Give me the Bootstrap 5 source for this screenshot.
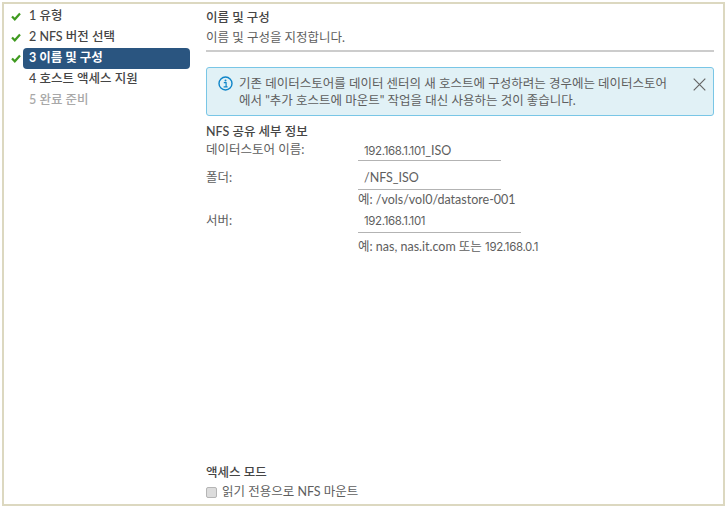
<!DOCTYPE html>
<html lang="ko">
<head>
<meta charset="utf-8">
<link rel="stylesheet" href="https://cdn.jsdelivr.net/npm/bootstrap@5.3.0/dist/css/bootstrap.min.css">
<style>
html,body{height:100%;margin:0;background:#fff}
body{font-family:Lato,"Noto Sans CJK KR",sans-serif;font-size:12.5px;line-height:16px;color:#5e5e5e;padding:2px}
.frame{height:504px;width:723px;border:2px solid #dcd8c0;background:#fff}
.steps{width:186px;padding:2px 0 0 7px;flex:none}
.step{height:21px;display:flex;align-items:center;font-weight:500;color:#454545}
.step svg{width:10px;height:9px;flex:none;margin-right:2px}
.step-body{flex:1;height:21px;line-height:20px;padding-left:6px;border-radius:4px}
.step-body.active-step{background:#2a5580;color:#fff;font-weight:700}
.step-none{margin-left:12px}
.step-muted{color:#a8a8a8}
.pane{width:508px;margin-left:16px;padding-top:5px}
.pane-title{font-weight:500;color:#454545;height:18px;line-height:18px}
.pane-sub{height:19px;line-height:19px;margin-top:1px}
.pane-rule{height:2px;background:#ccc;margin-top:3px}
.note{margin-top:15px;height:49px;background:#e1f1f6;border:1px solid #79c6e6;border-radius:3px;padding:7px 7px 0 11px;color:#5e5e5e}
.note svg{width:15px;height:15px;flex:none;margin:1px 6px 0 0}
.note-text{line-height:17px;height:34px;white-space:nowrap}
.note .note-x{width:13px;height:13px;margin:3px 0 0 auto}
.sec-title{font-weight:500;color:#454545;margin-top:8px;height:18px}
.frow{display:flex}
.frow-first{height:19px}
.frow-next{height:22px}
.frow-folder{margin-top:7px}
.flabel{width:152px;flex:none}
.frow-first .flabel{line-height:15px}
.frow-next .flabel{line-height:20px}
.fval{border-bottom:1px solid #b3b3b3;padding-left:6px;width:143px}
.frow-first .fval{line-height:17px}
.frow-next .fval{line-height:20px}
.fval-wide{width:163px}
.fhelp{padding-left:152px;height:21px;line-height:19px}
.fhelp-last{margin-top:4px}
.ipnum{font-family:Inter,sans-serif;font-size:11.5px;letter-spacing:-.35px}
.spacer{flex:1}
.access{padding-bottom:4px}
.check-row{margin-top:2px}
.fake-check{width:11px;height:11px;border:1px solid #b5b5b5;border-radius:2px;background:#dcdcdc;flex:none;margin-right:5px}
</style>
</head>
<body>
<div class="frame d-flex">
  <div class="steps">
    <div class="step"><svg viewBox="0 0 10 9"><path d="M1 4.5 L3.8 7.3 L9 1.5" fill="none" stroke="#3f9a1f" stroke-width="2.2"/></svg><div class="step-body">1 유형</div></div>
    <div class="step"><svg viewBox="0 0 10 9"><path d="M1 4.5 L3.8 7.3 L9 1.5" fill="none" stroke="#3f9a1f" stroke-width="2.2"/></svg><div class="step-body">2 NFS 버전 선택</div></div>
    <div class="step"><svg viewBox="0 0 10 9"><path d="M1 4.5 L3.8 7.3 L9 1.5" fill="none" stroke="#3f9a1f" stroke-width="2.2"/></svg><div class="step-body active-step">3 이름 및 구성</div></div>
    <div class="step"><div class="step-body step-none">4 호스트 액세스 지원</div></div>
    <div class="step step-muted"><div class="step-body step-none">5 완료 준비</div></div>
  </div>
  <div class="pane d-flex flex-column">
    <div class="pane-title">이름 및 구성</div>
    <div class="pane-sub">이름 및 구성을 지정합니다.</div>
    <div class="pane-rule"></div>
    <div class="note d-flex">
      <svg viewBox="0 0 15 15"><circle cx="7.5" cy="7.5" r="6.5" fill="none" stroke="#0f85c9" stroke-width="1.4"/><circle cx="7.5" cy="4.4" r="1" fill="#0f85c9"/><path d="M5.8 6.6h2.3v4.2h1.3M5.6 10.9h4" fill="none" stroke="#0f85c9" stroke-width="1.2"/></svg>
      <div class="note-text">기존 데이터스토어를 데이터 센터의 새 호스트에 구성하려는 경우에는 데이터스토어<br>에서 "추가 호스트에 마운트" 작업을 대신 사용하는 것이 좋습니다.</div>
      <svg class="note-x" viewBox="0 0 13 13"><path d="M.7.7l11.6 11.6M12.3.7L.7 12.3" fill="none" stroke="#666" stroke-width="1.2"/></svg>
    </div>
    <div class="sec-title">NFS 공유 세부 정보</div>
    <div class="frow frow-first"><div class="flabel">데이터스토어 이름:</div><div class="fval"><span class="ipnum">192.168.1.101</span>_ISO</div></div>
    <div class="frow frow-next frow-folder"><div class="flabel">폴더:</div><div class="fval">/NFS_ISO</div></div>
    <div class="fhelp">예: /vols/vol0/datastore-001</div>
    <div class="frow frow-next"><div class="flabel">서버:</div><div class="fval fval-wide"><span class="ipnum">192.168.1.101</span></div></div>
    <div class="fhelp fhelp-last">예: nas, nas.it.com 또는 <span class="ipnum">192.168.0.1</span></div>
    <div class="spacer"></div>
    <div class="access">
      <div class="pane-title">액세스 모드</div>
      <div class="check-row d-flex align-items-center"><span class="fake-check"></span><span>읽기 전용으로 NFS 마운트</span></div>
    </div>
  </div>
</div>
</body>
</html>
